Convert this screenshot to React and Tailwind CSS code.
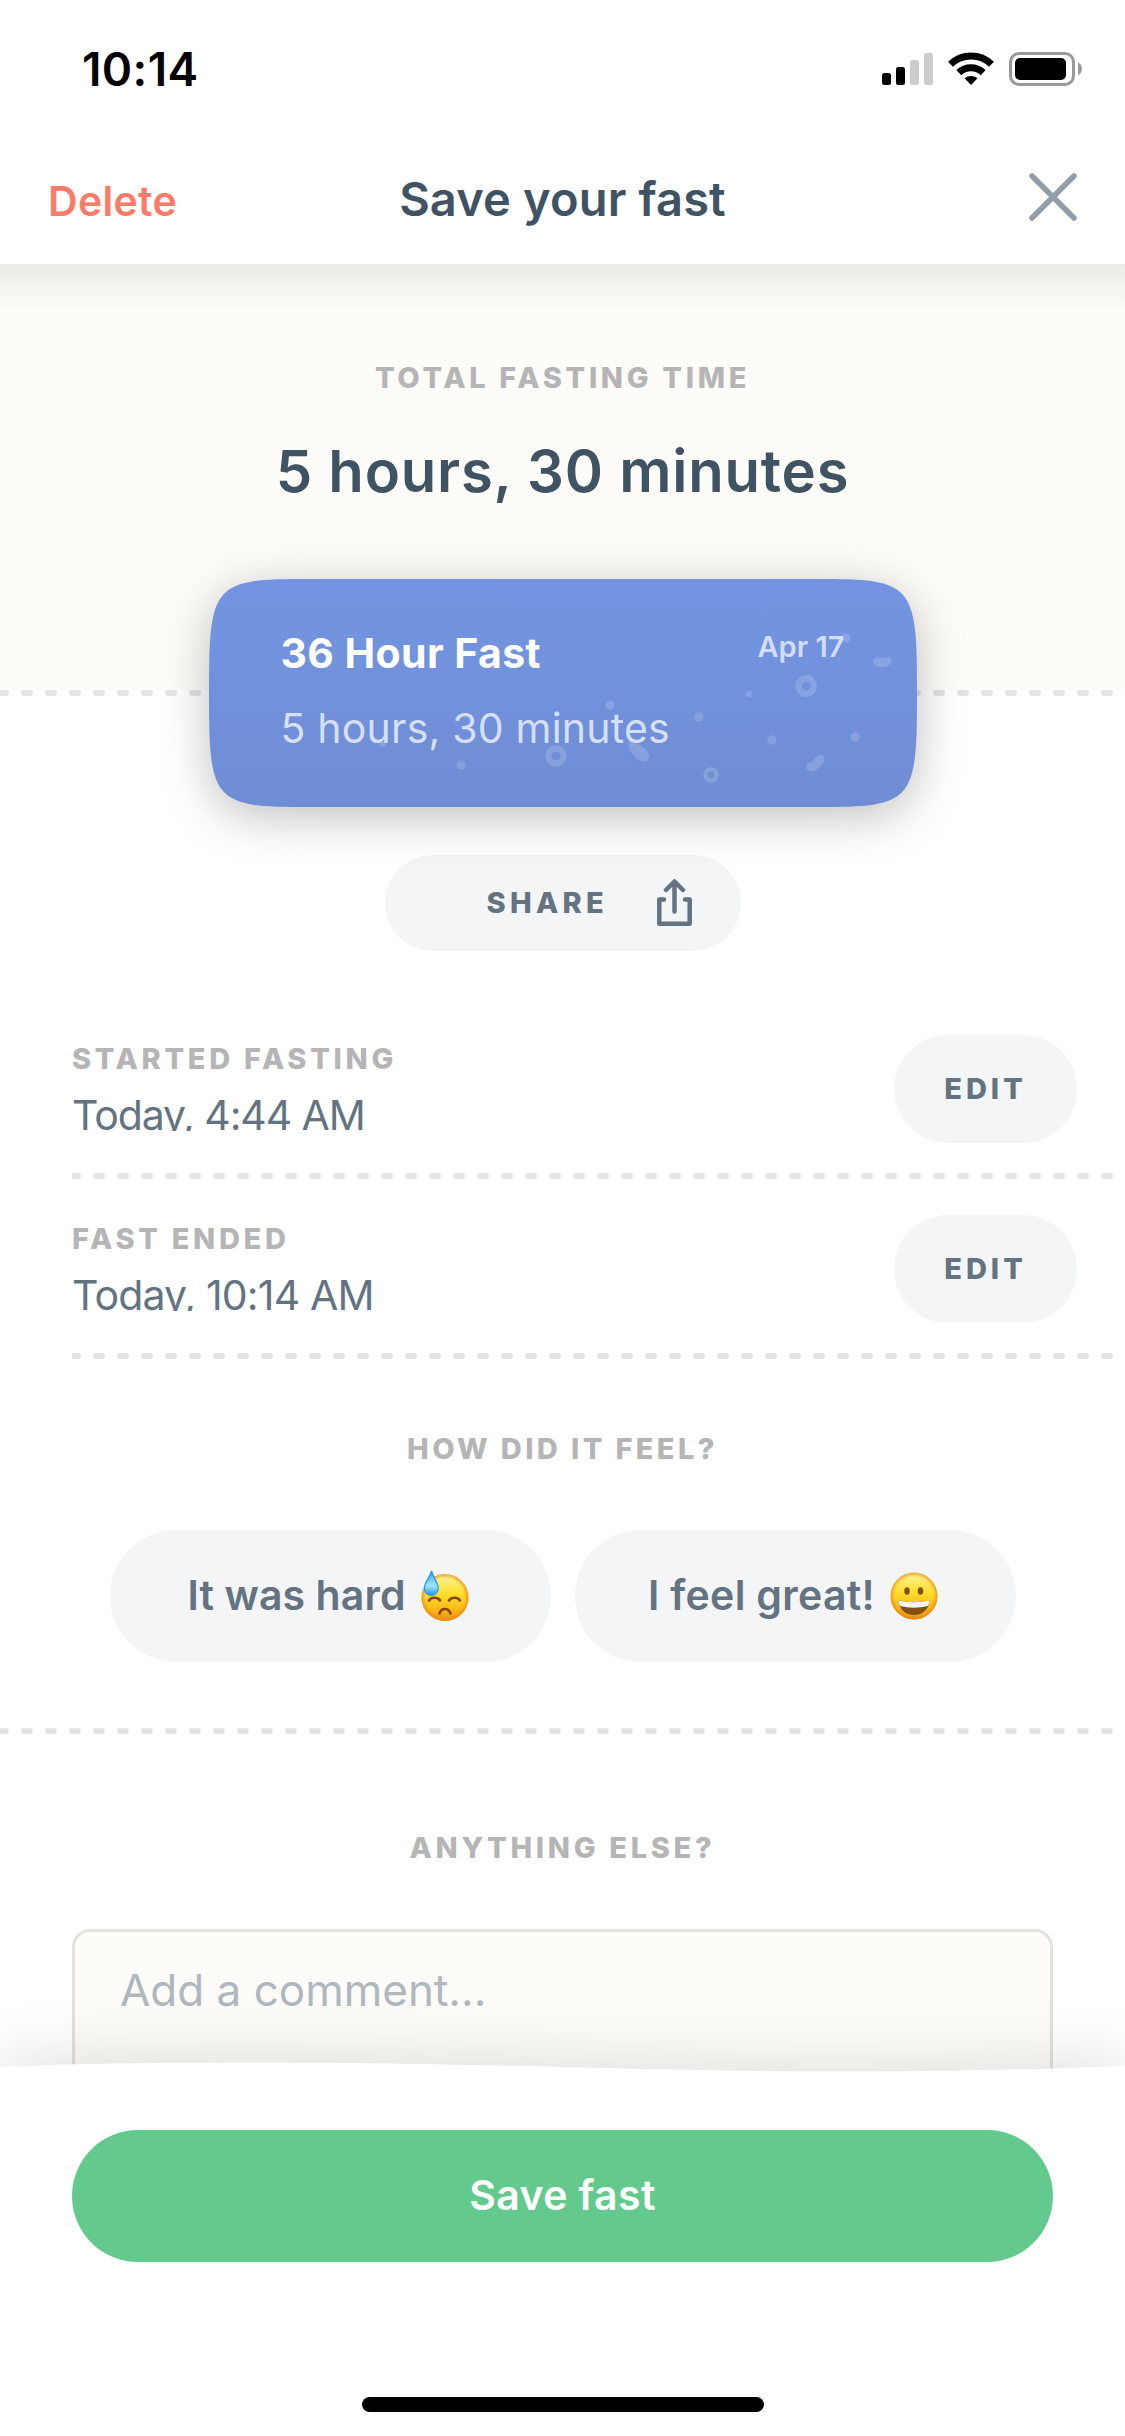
import React from 'react';

const SectionLabel = ({ children, className = '' }) => (
  <p className={`h-9 text-[29px] leading-9 font-extrabold text-[#b5b5b5] whitespace-nowrap ${className}`}>{children}</p>
);

const DashedLine = () => (
  <svg className="block w-full h-1.5" aria-hidden="true">
    <line x1="0" y1="3" x2="1200" y2="3" stroke="#e4e4e4" strokeWidth="6" strokeLinecap="round" strokeDasharray="6 18" />
  </svg>
);

const StatusIcons = () => (
  <svg width="202" height="36" viewBox="881 51 202 36" aria-hidden="true">
    {/* Signal */}
    <rect x="882" y="73" width="9" height="12" rx="2.5" />
    <rect x="896" y="67" width="9" height="18" rx="2.5" />
    <rect x="910" y="60" width="9" height="25" rx="2.5" fill="#cccccc" />
    <rect x="924" y="53" width="9" height="32" rx="2.5" fill="#cccccc" />
    {/* Wifi */}
    <g fill="none" stroke="#000" strokeWidth="7">
      <path d="M950.5 64.3a29.3 29.3 0 0 1 41 0" />
      <path d="M958.8 72.6a17.8 17.8 0 0 1 24.4 0" />
    </g>
    <path d="M964.5 78.3a10 10 0 0 1 13 0L971 85z" />
    {/* Battery */}
    <rect x="1010.5" y="53.5" width="63" height="31" rx="8.5" fill="none" stroke="#999" strokeWidth="3" />
    <rect x="1015" y="58" width="51" height="22" rx="5" />
    <path d="M1078 62.5c5.300 2 5.300 10.500 0 12.500z" fill="#999" />
  </svg>
);

const CloseIcon = () => (
  <svg width="48" height="48" viewBox="0 0 48 48" fill="none" stroke="#929ea7" strokeWidth="5.5" strokeLinecap="round">
    <path d="M3 3l42 42M45 3L3 45" />
  </svg>
);

const ShareIcon = () => (
  <svg width="35" height="48" viewBox="0 0 35 48" fill="none" stroke="#637381" strokeWidth="4.500" strokeLinejoin="round" strokeLinecap="round">
    <path d="M17.500 32.500V3M9 11l8.500-8.500L26 11" />
    <path d="M7 20.500H2.300V44.700H32.700V20.500H28" />
  </svg>
);

const CardBackground = () => (
  <svg
    className="absolute inset-0 overflow-visible drop-shadow-[0_10px_24px_rgba(0,0,0,0.25)]"
    width="708"
    height="228"
    viewBox="0 0 708 228"
    aria-hidden="true"
  >
    <defs>
      <linearGradient id="card" x1="0" y1="0" x2="0" y2="1">
        <stop offset="0" stopColor="#7395e1" />
        <stop offset="1" stopColor="#6f8dd4" />
      </linearGradient>
    </defs>
    <path
      d="M0 114C0 10 3 0 90 0H618C705 0 708 10 708 114C708 218 705 228 618 228H90C3 228 0 218 0 114Z"
      fill="url(#card)"
    />
    <g fill="#fff" fillOpacity="0.16">
      <circle cx="637" cy="59" r="4.500" />
      <circle cx="540" cy="115" r="3.200" />
      <circle cx="401" cy="126" r="4.700" />
      <circle cx="490" cy="138" r="4.700" />
      <circle cx="563" cy="161" r="4.700" />
      <circle cx="646" cy="158" r="4.700" />
      <circle cx="252" cy="186" r="4.700" />
      <circle cx="174" cy="165" r="3" />
      <path d="M667.500 78.500c2-.8 6.500.8 9.500 0 4.500-1.200 7 1.500 5 5.500-2.500 5-14.500 6-17.500 1-1.800-3-.3-5.500 3-6.500z" />
      <path d="M420 160c6-1 6 4 11 6.500 7 3.500 11 8.500 8.500 13.500-2.500 4.500-9 3-13.500-2-6-6.500-8-13-6-18z" />
      <path d="M600 183.500c4.500-.5 4-3 7.500-6 4.500-3.500 9-1 8 3.500-1.500 7-11.500 13-15.500 11-4-2.500-3.500-8 0-8.500z" />
    </g>
    <g fill="none" stroke="#fff" strokeOpacity="0.16">
      <circle cx="597" cy="107" r="7.700" strokeWidth="6.500" />
      <circle cx="347" cy="177" r="7.600" strokeWidth="6" />
      <circle cx="502" cy="196" r="5.600" strokeWidth="4.300" />
    </g>
  </svg>
);

const FaceGradient = ({ id }) => (
  <defs>
    <linearGradient id={`${id}-fill`} x1="0" y1="0" x2="0" y2="1">
      <stop offset="0" stopColor="#fff3a0" />
      <stop offset="0.4" stopColor="#ffe030" />
      <stop offset="0.75" stopColor="#fdb916" />
      <stop offset="1" stopColor="#f08c0c" />
    </linearGradient>
    <radialGradient id={`${id}-rim`}>
      <stop offset="0.8" stopColor="#ee9410" stopOpacity="0" />
      <stop offset="1" stopColor="#e8860c" stopOpacity="0.75" />
    </radialGradient>
    <linearGradient id={`${id}-drop`} x1="0" y1="0" x2="0" y2="1">
      <stop offset="0" stopColor="#2fa0ec" />
      <stop offset="0.6" stopColor="#a4e4fd" />
      <stop offset="1" stopColor="#189af0" />
    </linearGradient>
  </defs>
);

const SweatFace = () => (
  <svg width="48" height="52" viewBox="0 0 48 52" className="shrink-0" role="img" aria-label="Downcast face with sweat">
    <FaceGradient id="sweat" />
    <circle cx="24" cy="27.500" r="23.500" fill="url(#sweat-fill)" />
    <circle cx="24" cy="27.500" r="23.500" fill="url(#sweat-rim)" />
    <g fill="none" stroke="#83460b" strokeWidth="2.600" strokeLinecap="round">
      <path d="M8 30.500c2.500-3.600 8.500-3.600 11 0" />
      <path d="M28 30.500c2.500-3.600 8.500-3.600 11 0" />
      <path d="M18.500 43.500c2-6 9-6 11 0" />
    </g>
    <path d="M10.500 1c1.500 7 6.700 11 6.700 17.500a6.900 6.900 0 0 1-13.800 0C3.400 12 9 8 10.500 1z" fill="url(#sweat-drop)" stroke="#279de8" strokeWidth="1.300" />
  </svg>
);

const GrinFace = () => (
  <svg width="48" height="52" viewBox="0 0 48 52" className="shrink-0" role="img" aria-label="Grinning face">
    <FaceGradient id="grin" />
    <circle cx="24" cy="26" r="23.500" fill="url(#grin-fill)" />
    <circle cx="24" cy="26" r="23.500" fill="url(#grin-rim)" />
    <ellipse cx="17" cy="21" rx="2.800" ry="3.800" fill="#83500e" />
    <ellipse cx="30.500" cy="21" rx="2.800" ry="3.800" fill="#83500e" />
    <path d="M8.500 30.500Q24 34 39.500 30.500C39 40 32 45 24 45S9 40 8.500 30.500z" fill="#83500e" />
    <path d="M8.500 30.500Q24 34 39.500 30.500Q39.500 33 38 36Q24 39.500 10 36Q8.500 33 8.500 30.500z" fill="#f4f4f4" />
  </svg>
);

const times = [
  { label: 'STARTED FASTING', value: 'Today, 4:44 AM', valueClass: 'tracking-[-1.1px]' },
  { label: 'FAST ENDED', value: 'Today, 10:14 AM', valueClass: 'tracking-[-0.85px]' },
];

const TimeRow = ({ label, value, valueClass }) => (
  <div className="pl-[72px]">
    <div className="flex justify-between pt-9 pb-[30px] pr-12">
      <div className="pt-[6px]">
        <SectionLabel className="tracking-[3.7px]">{label}</SectionLabel>
        {/* Fixed line box, descenders get cut */}
        <p className={`mt-[15px] h-[39px] overflow-hidden text-[41px] leading-[47px] text-[#637381] whitespace-nowrap ${valueClass}`}>
          {value}
        </p>
      </div>
      <button className="w-[183px] h-[108px] rounded-full bg-[#f3f5f7] pb-px text-[29px] font-extrabold tracking-[4px] text-[#637381]">
        EDIT
      </button>
    </div>
    <DashedLine />
  </div>
);

const App = () => {
  return (
    <div className="w-[1125px] h-[2436px] flex flex-col overflow-hidden bg-white font-['Inter',sans-serif]">
      {/* Header */}
      <header className="relative z-10 h-[264px] shrink-0 bg-white">
        <div className="flex h-[132px] items-center justify-between pl-[82px] pr-[42px] pt-[6px]">
          <span className="text-[46px] leading-none font-semibold tracking-[0.4px] text-black">10:14</span>
          <StatusIcons />
        </div>
        <div className="grid h-[132px] grid-cols-[1fr_auto_1fr] items-center pl-12 pr-12">
          <button className="justify-self-start pt-[6px] text-[41px] leading-none font-semibold tracking-[0.3px] text-[#fa7c68]">Delete</button>
          <h1 className="pt-px text-[47px] leading-none font-semibold tracking-[0.15px] text-[#3f5362]">Save your fast</h1>
          <button className="justify-self-end -mt-0.5" aria-label="Close">
            <CloseIcon />
          </button>
        </div>
        <div className="absolute inset-x-0 top-full h-12 bg-linear-to-b from-black/[0.07] to-transparent" />
      </header>

      <main className="min-h-0 flex-1">
        {/* Total time */}
        <section className="flex h-[426px] flex-col items-center bg-[#fdfcf8] pt-24">
          <SectionLabel className="tracking-[3.7px]">TOTAL FASTING TIME</SectionLabel>
          <p className="mt-[39px] text-[58px] leading-[72px] font-semibold tracking-[0.8px] text-[#3f5362]">5 hours, 30 minutes</p>
        </section>
        <DashedLine />

        {/* Fast card */}
        <div className="relative mx-auto -mt-[117px] h-[228px] w-[708px]">
          <CardBackground />
          <div className="relative flex justify-between pl-[72px] pr-[72px] pt-[50px]">
            <div>
              <h2 className="text-[41px] leading-[48px] font-bold tracking-[0.4px] text-white">36 Hour Fast</h2>
              <p className="mt-[27px] text-[41px] leading-[48px] tracking-[0.2px] text-[#d5dff5]">5 hours, 30 minutes</p>
            </div>
            <span className="text-[29px] leading-9 font-semibold text-[#d3ddf5]">Apr 17</span>
          </div>
        </div>

        <button className="mx-auto mt-12 flex h-24 w-[356px] items-center rounded-full bg-[#f3f5f7] pl-[102px] text-[#637381]">
          <span className="w-[170px] pb-px text-left text-[29px] font-extrabold tracking-[4.3px]">SHARE</span>
          <ShareIcon />
        </button>

        {/* Start and end times */}
        <div className="mt-12">
          {times.map((time) => (
            <TimeRow key={time.label} {...time} />
          ))}
        </div>

        {/* Feeling */}
        <SectionLabel className="mt-[72px] text-center tracking-[3.4px]">HOW DID IT FEEL?</SectionLabel>
        <div className="mt-[63px] mb-[66px] flex justify-center gap-6">
          <button className="flex h-[132px] w-[441px] items-center justify-center gap-[15px] rounded-full bg-[#f3f5f7] pr-1 text-[41px] font-semibold tracking-[0.1px] text-[#637381]">
            <span>It was hard</span>
            <SweatFace />
          </button>
          <button className="flex h-[132px] w-[441px] items-center justify-center gap-[15px] rounded-full bg-[#f3f5f7] pr-1 text-[41px] font-semibold tracking-[0.3px] text-[#637381]">
            <span>I feel great!</span>
            <GrinFace />
          </button>
        </div>
        <DashedLine />

        {/* Comment */}
        <SectionLabel className="mt-24 text-center tracking-[3.7px]">ANYTHING ELSE?</SectionLabel>
        <div className="mx-[72px] mt-[63px] h-[150px] rounded-t-[18px] border-[3px] border-b-0 border-[#e1e1dd] bg-[#fdfcf8] pl-[45px] pt-[28px]">
          <p className="text-[44px] leading-[60px] text-[#afb8bf]">Add a comment...</p>
        </div>
      </main>

      {/* Save bar */}
      <footer className="relative h-[369px] shrink-0 px-[72px] pt-[63px]">
        <svg
          className="absolute left-0 -top-[6px] overflow-visible drop-shadow-[0_-12px_28px_rgba(0,0,0,0.1)]"
          width="1125"
          height="375"
          viewBox="0 0 1125 375"
          aria-hidden="true"
        >
          <path d="M0 6C90 2 180 1.500 260 1.500C480 1.500 640 10.500 850 10.500C950 10.500 1050 8 1125 5V375H0Z" fill="#fff" />
        </svg>
        <button className="relative block h-[132px] w-full rounded-full bg-[#63c98d] text-[41px] font-semibold tracking-[0.4px] text-white">
          Save fast
        </button>
        <div className="relative mx-auto mt-[135px] h-[15px] w-[402px] rounded-full bg-black" />
      </footer>
    </div>
  );
};

export default App;
